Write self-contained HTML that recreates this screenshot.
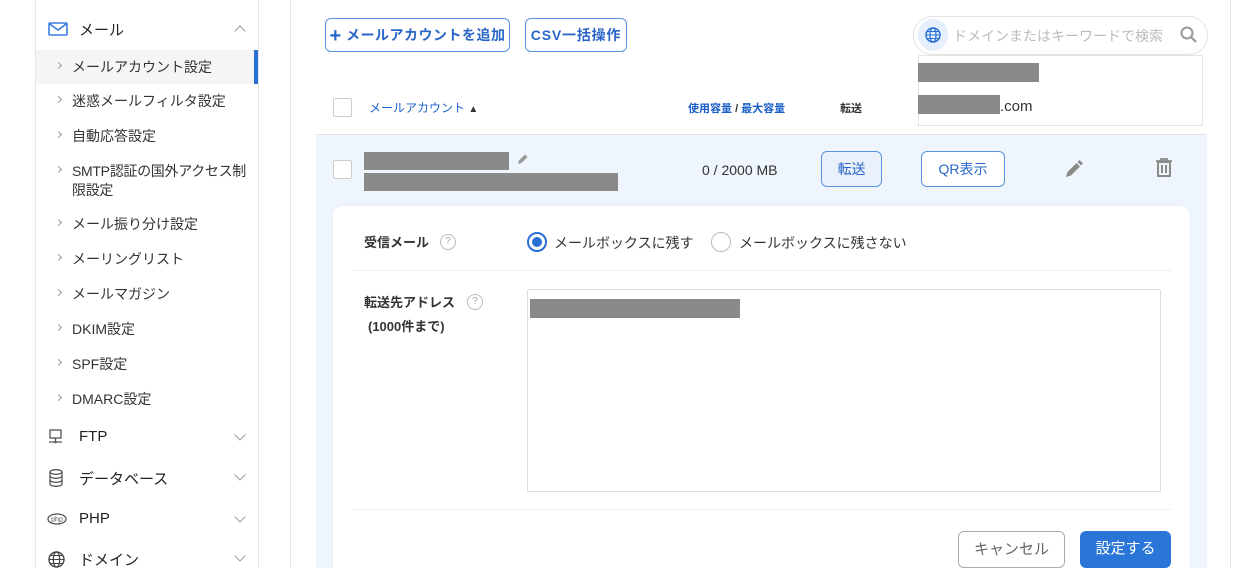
<!DOCTYPE html>
<html><head><meta charset="utf-8"><style>
*{margin:0;padding:0;box-sizing:border-box}
html,body{width:1236px;height:568px;overflow:hidden}
body{background:#fff;font-family:"Liberation Sans","Noto Sans CJK JP",sans-serif;color:#333;position:relative}
.a{position:absolute}
.side{left:35px;top:0;width:224px;height:568px;border-left:1px solid #e6e6e6;border-right:1px solid #e6e6e6}
.vl{left:290px;top:0;width:1px;height:568px;background:#e6e6e6}
.item{position:absolute;left:0;width:222px;font-size:14px;color:#333}
.item .c{position:absolute;left:20px;top:5px;width:5px;height:5px;border-right:1px solid #999;border-top:1px solid #999;transform:rotate(45deg)}
.item .t{position:absolute;left:36px;line-height:19px}
.grp{position:absolute;left:0;width:222px;font-size:15px;color:#222}
.grp .t{position:absolute;left:43px}
.grp .ch{position:absolute;left:200px;width:8px;height:8px;border-right:1px solid #999;border-bottom:1px solid #999;transform:rotate(45deg)}
.btn{position:absolute;border:1px solid #5a93e0;border-radius:6px;color:#2a66c8;font-weight:bold;font-size:14px;text-align:center;background:#fff}
.gray{position:absolute;background:#8a8a8a}
.cb{position:absolute;width:19px;height:19px;border:1px solid #ccc;border-radius:2px;background:#fff}
a{color:#1a5fc8}
</style></head><body>
<div class="a side">
  <div class="grp" style="top:19px;height:22px">
    <svg class="a" style="left:12px;top:3px" width="20" height="14" viewBox="0 0 20 14"><rect x="1" y="1" width="18" height="12" rx="1" fill="none" stroke="#3b7ddd" stroke-width="1.6"/><path d="M1.5 1.8 L10 8 L18.5 1.8" fill="none" stroke="#3b7ddd" stroke-width="1.6"/></svg>
    <span class="t" style="top:0">メール</span>
    <span class="ch" style="top:8px;transform:rotate(-135deg)"></span>
  </div>
  <div class="a" style="left:0;top:50px;width:222px;height:34px;background:#f5f5f5"></div>
  <div class="a" style="left:218px;top:50px;width:4px;height:34px;background:#2a6fd6"></div>
  <div class="item" style="top:58px"><span class="c"></span><span class="t">メールアカウント設定</span></div>
  <div class="item" style="top:92px"><span class="c"></span><span class="t">迷惑メールフィルタ設定</span></div>
  <div class="item" style="top:127px"><span class="c"></span><span class="t">自動応答設定</span></div>
  <div class="item" style="top:162px"><span class="c"></span><span class="t" style="letter-spacing:-0.3px">SMTP認証の国外アクセス制<br>限設定</span></div>
  <div class="item" style="top:215px"><span class="c"></span><span class="t">メール振り分け設定</span></div>
  <div class="item" style="top:250px"><span class="c"></span><span class="t">メーリングリスト</span></div>
  <div class="item" style="top:285px"><span class="c"></span><span class="t">メールマガジン</span></div>
  <div class="item" style="top:320px"><span class="c"></span><span class="t">DKIM設定</span></div>
  <div class="item" style="top:355px"><span class="c"></span><span class="t">SPF設定</span></div>
  <div class="item" style="top:390px"><span class="c"></span><span class="t">DMARC設定</span></div>
  <div class="grp" style="top:428px"><svg class="a" style="left:12px;top:1px" width="16" height="16" viewBox="0 0 16 16"><rect x="2" y="1" width="11" height="8" fill="none" stroke="#555" stroke-width="1.3"/><path d="M7.5 9v3M1 13h13" stroke="#555" stroke-width="1.3"/><circle cx="7.5" cy="13" r="1.3" fill="#555"/></svg><span class="t">FTP</span><span class="ch" style="top:3px"></span></div>
  <div class="grp" style="top:468px"><svg class="a" style="left:13px;top:1px" width="14" height="18" viewBox="0 0 14 18"><ellipse cx="7" cy="3" rx="6" ry="2.3" fill="none" stroke="#555" stroke-width="1.3"/><path d="M1 3v12c0 1.3 2.7 2.3 6 2.3s6-1 6-2.3V3M1 7c0 1.3 2.7 2.3 6 2.3s6-1 6-2.3M1 11c0 1.3 2.7 2.3 6 2.3s6-1 6-2.3" fill="none" stroke="#555" stroke-width="1.3"/></svg><span class="t">データベース</span><span class="ch" style="top:3px"></span></div>
  <div class="grp" style="top:510px"><svg class="a" style="left:11px;top:3px" width="20" height="12" viewBox="0 0 20 12"><ellipse cx="10" cy="6" rx="9" ry="5" fill="none" stroke="#555" stroke-width="1.3"/><text x="10" y="8.5" font-size="7" text-anchor="middle" fill="#555" font-family="Liberation Sans">php</text></svg><span class="t">PHP</span><span class="ch" style="top:3px"></span></div>
  <div class="grp" style="top:549px"><svg class="a" style="left:12px;top:2px" width="17" height="17" viewBox="0 0 17 17"><circle cx="8.5" cy="8.5" r="7.5" fill="none" stroke="#444" stroke-width="1.4"/><ellipse cx="8.5" cy="8.5" rx="3.2" ry="7.5" fill="none" stroke="#444" stroke-width="1.2"/><path d="M1 8.5h15M2.5 4.5h12M2.5 12.5h12" stroke="#444" stroke-width="1.1"/></svg><span class="t">ドメイン</span><span class="ch" style="top:3px"></span></div>
</div>
<div class="a vl"></div>

<div class="btn" style="left:325px;top:18px;width:185px;height:34px;line-height:32px;letter-spacing:0.5px"><span style="font-size:20px;vertical-align:-2px">+</span> メールアカウントを追加</div>
<div class="btn" style="left:525px;top:18px;width:102px;height:34px;line-height:32px;letter-spacing:0.8px">CSV一括操作</div>

<div class="a" style="left:913px;top:16px;width:295px;height:39px;border:1px solid #e3e3e3;border-radius:20px;background:#fff"></div>
<div class="a" style="left:918px;top:19px;width:30px;height:32px;border-radius:50%;background:#e6f0fc"></div>
<svg class="a" style="left:925px;top:27px" width="16" height="16" viewBox="0 0 16 16"><circle cx="8" cy="8" r="7" fill="none" stroke="#2a6fd6" stroke-width="1.5"/><ellipse cx="8" cy="8" rx="3" ry="7" fill="none" stroke="#2a6fd6" stroke-width="1.2"/><path d="M1 8h14M2 4.5h12M2 11.5h12" stroke="#2a6fd6" stroke-width="1.1"/></svg>
<div class="a" style="left:953px;top:26px;font-size:14px;color:#bbb">ドメインまたはキーワードで検索</div>
<svg class="a" style="left:1180px;top:26px" width="18" height="18" viewBox="0 0 18 18"><circle cx="7" cy="7" r="5.5" fill="none" stroke="#999" stroke-width="2"/><path d="M11 11l5 5" stroke="#999" stroke-width="2.2"/></svg>
<div class="a" style="left:918px;top:55px;width:285px;height:71px;border:1px solid #e3e3e3;background:#fff"></div>
<div class="gray" style="left:918px;top:63px;width:121px;height:19px"></div>
<div class="gray" style="left:918px;top:95px;width:82px;height:19px"></div>
<div class="a" style="left:1000px;top:98px;font-size:15px;color:#333">.com</div>

<div class="cb" style="left:333px;top:98px"></div>
<div class="a" style="left:369px;top:99px;font-size:12px"><a>メールアカウント</a> <span style="font-size:10px">▲</span></div>
<div class="a" style="left:688px;top:100px;font-size:11px;font-weight:bold;color:#1a5fc8"><a>使用容量</a> <span style="color:#333">/</span> <a>最大容量</a></div>
<div class="a" style="left:840px;top:100px;font-size:11px;font-weight:bold;color:#333">転送</div>

<div class="a" style="left:316px;top:134px;width:891px;height:434px;background:#eff5fd;border-top:1px solid #e2e6ec"></div>
<div class="a" style="left:1230px;top:0;width:1px;height:568px;background:#e6e6e6"></div>
<div class="cb" style="left:333px;top:160px"></div>
<div class="gray" style="left:364px;top:152px;width:145px;height:18px"></div>
<div class="gray" style="left:364px;top:173px;width:254px;height:18px"></div>
<svg class="a" style="left:516px;top:152px" width="14" height="14" viewBox="0 0 14 14"><path d="M2 12l1-3.5 6-6 2.5 2.5-6 6z" fill="#999"/></svg>
<div class="a" style="left:702px;top:162px;font-size:14px;color:#333">0 / 2000 MB</div>
<div class="btn" style="left:821px;top:151px;width:61px;height:36px;line-height:34px;font-weight:normal;background:#eaf1fb">転送</div>
<div class="btn" style="left:921px;top:151px;width:84px;height:36px;line-height:34px;font-weight:normal">QR表示</div>
<svg class="a" style="left:1064px;top:159px" width="20" height="20" viewBox="0 0 20 20"><path d="M2 18l1.5-5 9-9 3.5 3.5-9 9z M13.5 3l2-2 3.5 3.5-2 2z" fill="#8a8a8a"/></svg>
<svg class="a" style="left:1155px;top:158px" width="18" height="20" viewBox="0 0 18 20"><path d="M1 3h16M6 3V1h6v2" stroke="#8a8a8a" stroke-width="1.8" fill="none"/><rect x="3" y="4" width="12" height="14" fill="none" stroke="#8a8a8a" stroke-width="2"/><path d="M7 7v8M11 7v8" stroke="#8a8a8a" stroke-width="2"/></svg>

<div class="a" style="left:332px;top:205px;width:859px;height:370px;background:#fff;border-radius:10px;border:1px solid #e8eef6"></div>
<div class="a" style="left:364px;top:232px;font-size:13px;font-weight:bold;color:#333">受信メール</div>
<div class="a" style="left:440px;top:234px;width:16px;height:16px;border:1px solid #bbb;border-radius:50%;font-size:10px;color:#aaa;text-align:center;line-height:14px">?</div>
<div class="a" style="left:527px;top:232px;width:20px;height:20px;border:2px solid #2a6fd6;border-radius:50%"></div>
<div class="a" style="left:532px;top:237px;width:10px;height:10px;background:#2a6fd6;border-radius:50%"></div>
<div class="a" style="left:554px;top:233px;font-size:14px;color:#333">メールボックスに残す</div>
<div class="a" style="left:711px;top:232px;width:20px;height:20px;border:1px solid #bbb;border-radius:50%"></div>
<div class="a" style="left:739px;top:233px;font-size:14px;color:#333">メールボックスに残さない</div>
<div class="a" style="left:352px;top:270px;width:820px;height:1px;background:#f0f0f0"></div>
<div class="a" style="left:364px;top:292px;font-size:13px;font-weight:bold;color:#333">転送先アドレス</div>
<div class="a" style="left:467px;top:294px;width:16px;height:16px;border:1px solid #bbb;border-radius:50%;font-size:10px;color:#aaa;text-align:center;line-height:14px">?</div>
<div class="a" style="left:368px;top:316px;font-size:13px;font-weight:bold;color:#333">(1000件まで)</div>
<div class="a" style="left:527px;top:289px;width:634px;height:203px;border:1px solid #ddd;border-radius:2px"></div>
<div class="gray" style="left:530px;top:299px;width:210px;height:19px"></div>
<div class="a" style="left:352px;top:509px;width:820px;height:1px;background:#f0f0f0"></div>
<div class="a" style="left:958px;top:531px;width:107px;height:37px;border:1px solid #aaa;border-radius:6px;font-size:15px;color:#666;text-align:center;line-height:35px">キャンセル</div>
<div class="a" style="left:1080px;top:531px;width:91px;height:37px;background:#2a76d8;border-radius:6px;font-size:15px;color:#fff;text-align:center;line-height:35px">設定する</div>
</body></html>
